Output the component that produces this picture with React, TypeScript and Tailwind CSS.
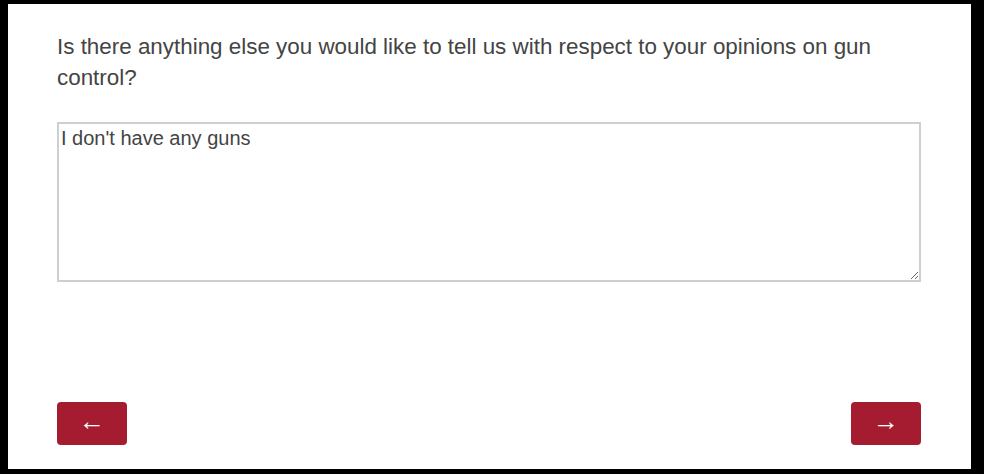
import React from "react";

export default function App() {
  return (
    <div className="w-[984px] h-[474px] bg-black pl-[8px] pt-[4px] overflow-hidden">
      <div
        className="w-[963px] h-[465px] bg-white flex flex-col pl-[49px] pr-[50px]"
        style={{ fontFamily: '"Liberation Sans", Arial, sans-serif' }}
      >
        <h1 className="mt-[27px] text-[22.4px] leading-[31px] text-[#444444] font-normal">
          Is there anything else you would like to tell us with respect to your opinions on gun control?
        </h1>
        <textarea
          className="mt-[29px] w-[864px] h-[160px] border-2 border-[#cfcfcf] px-[2px] py-[2px] text-[20px] leading-[24px] text-[#444444] outline-none"
          style={{ fontFamily: '"Liberation Sans", Arial, sans-serif' }}
          defaultValue="I don't have any guns"
        />
        <div className="mt-[120px] flex justify-between">
          <button className="w-[70px] h-[43px] pb-[5px] rounded-[4px] bg-[#a51c30] text-white text-[26px] leading-none flex items-center justify-center">
            ←
          </button>
          <button className="w-[70px] h-[43px] pb-[5px] rounded-[4px] bg-[#a51c30] text-white text-[26px] leading-none flex items-center justify-center">
            →
          </button>
        </div>
      </div>
    </div>
  );
}
